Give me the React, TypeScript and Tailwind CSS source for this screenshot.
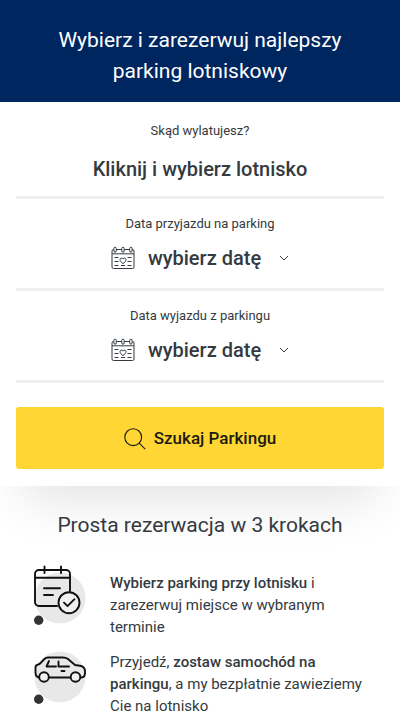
import { useState, type ReactNode } from 'react'

function CalendarIcon() {
  return (
    <svg viewBox="0 0 24 24" className="size-6 shrink-0" fill="none" stroke="currentColor" strokeWidth="1" aria-hidden="true">
      <path d="M2.8 3.5H2.5A1.5 1.5 0 0 0 1 5v16a1.5 1.5 0 0 0 1.5 1.5h19A1.5 1.5 0 0 0 23 21V5a1.5 1.5 0 0 0-1.5-1.5h-.3M5.3 3.5h5.5M13.2 3.5h5.5M1 7.8h22" />
      <rect x="2.900" y="1.200" width="2.400" height="5" rx="1.200" />
      <rect x="10.800" y="1.200" width="2.400" height="5" rx="1.200" />
      <rect x="18.700" y="1.200" width="2.400" height="5" rx="1.200" />
      <path d="M12 17.600c-1.600-1.200-3-2.400-3-3.900 0-1.900 2.300-2.200 3-.6.7-1.600 3-1.300 3 .6 0 1.500-1.400 2.700-3 3.900z" />
      <path d="M3.500 11.500h4M16.500 11.500h4M3.500 15.500h4M16.500 15.500h4M3.500 19.500h4M10 19.500h4M16.500 19.500h4" />
    </svg>
  )
}

function ChevronIcon() {
  return (
    <svg viewBox="0 0 10 10" className="size-[10px] shrink-0" fill="none" stroke="currentColor" strokeWidth="1" aria-hidden="true">
      <path d="M1 3l4 4 4-4" />
    </svg>
  )
}

function SearchIcon() {
  return (
    <svg viewBox="0 0 22 22" className="size-[22px] shrink-0" fill="none" stroke="currentColor" strokeWidth="1.1" aria-hidden="true">
      <circle cx="9.2" cy="9.2" r="8.4" />
      <path d="M15.2 15.2l6 6" />
    </svg>
  )
}

function StepIcon({ children }: { children: ReactNode }) {
  return (
    <svg viewBox="0 0 60 62" className="h-[62px] w-[60px] shrink-0" fill="none" aria-hidden="true">
      <circle cx="30" cy="33" r="25.5" fill="#e8e8e8" />
      <circle cx="8.7" cy="55.3" r="4.7" fill="#333" />
      <g stroke="#111" strokeWidth="1.9" strokeLinecap="round" strokeLinejoin="round">{children}</g>
    </svg>
  )
}

function DateField({ id, label }: { id: string; label: string }) {
  return (
    <div className="flex flex-col items-center border-b-[3px] border-[#efefef] pt-[15px] pb-[6px]">
      <label htmlFor={id} className="text-[13px] leading-5">
        {label}
      </label>
      <button id={id} type="button" aria-haspopup="dialog" className="flex h-12 items-center">
        <CalendarIcon />
        <span className="ml-[13px] text-[20px] font-medium">wybierz datę</span>
        <span className="ml-[18px]">
          <ChevronIcon />
        </span>
      </button>
    </div>
  )
}

export default function App() {
  const [airport, setAirport] = useState('')

  return (
    <div className="bg-white font-['Roboto',sans-serif] text-[#343a40]">
      <header className="bg-[#00265f] px-10 pt-[25px] pb-[15px] text-center">
        <h1 className="text-[21px] leading-[31px] text-white">
          Wybierz i zarezerwuj najlepszy parking lotniskowy
        </h1>
      </header>

      <main>
        <form
          className="bg-white px-4 pt-1 pb-[17px] shadow-[0_36px_50px_-24px_rgba(0,0,0,0.12)]"
          onSubmit={e => e.preventDefault()}
        >
          <div className="flex flex-col items-center border-b-[3px] border-[#efefef] pt-[15px]">
            <label htmlFor="airport" className="text-[13px] leading-5">
              Skąd wylatujesz?
            </label>
            <input
              id="airport"
              value={airport}
              onChange={e => setAirport(e.target.value)}
              placeholder="Kliknij i wybierz lotnisko"
              className="h-[55px] w-full text-center text-[20px] font-medium outline-none placeholder:text-[#343a40]"
            />
          </div>
          <DateField id="arrival" label="Data przyjazdu na parking" />
          <DateField id="departure" label="Data wyjazdu z parkingu" />

          <button
            type="submit"
            className="mt-6 flex h-[62px] w-full items-center justify-center gap-2 rounded-[3px] bg-[#ffd634] pt-[2px] text-[17px] font-medium text-[#1c1a10]"
          >
            <SearchIcon />
            Szukaj Parkingu
          </button>
        </form>

        <section className="px-[30px] pt-6">
          <h2 className="text-center text-[21px] leading-[30px]">Prosta rezerwacja w 3 krokach</h2>
          <ol className="mt-[25px] flex flex-col gap-[6px] text-[15px] leading-[22px]">
            <li className="flex gap-5">
              <StepIcon>
                <path d="M27 41H9a4 4 0 0 1-4-4V9a4 4 0 0 1 4-4H36a4 4 0 0 1 4 4v17M5 12.700H40M14.500 1.500v6.500M31 1.500v6.500M14 23.300h16M14 30h9" />
                <circle cx="39" cy="37.7" r="10.5" fill="#f1f1f1" />
                <path d="M34 37.700l3.500 3.500 7-7" />
              </StepIcon>
              <p className="pt-[7px]">
                <strong className="font-medium">Wybierz parking przy lotnisku</strong> i zarezerwuj miejsce w wybranym terminie
              </p>
            </li>
            <li className="flex gap-5">
              <StepIcon>
                <g transform="translate(0 5)">
                  <path d="M9 28.500c-2.500-.5-3.500-2-3.500-5v-5c0-2 1.500-3 4-3.500l5-5c1-1 2-1.500 3.500-1.500h15c2 0 3.500.5 5 1.500l7 6 5 .8c3.500.7 5 2.500 5 5.500v2c0 2.500-1 4-3.500 4.200M19 28.500h21.500" />
                  <path d="M19 12l-2.500 5.500H26M28.500 12.500v5H39M31.500 22h3" />
                  <circle cx="14" cy="28" r="4.8" fill="#f1f1f1" />
                  <circle cx="45.5" cy="28" r="4.8" fill="#f1f1f1" />
                </g>
              </StepIcon>
              <p className="pt-[7px]">
                Przyjedź, <strong className="font-medium">zostaw samochód na parkingu</strong>, a my bezpłatnie zawieziemy Cię na lotnisko
              </p>
            </li>
          </ol>
        </section>
      </main>
    </div>
  )
}
